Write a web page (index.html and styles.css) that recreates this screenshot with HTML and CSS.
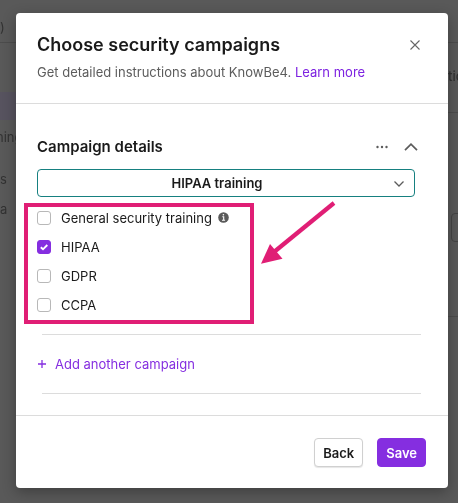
FILE: index.html
```html
<!DOCTYPE html>
<html lang="en">
<head>
<meta charset="utf-8">
<meta name="viewport" content="width=device-width, initial-scale=1">
<title>Choose security campaigns</title>
<link rel="stylesheet" href="styles.css">
</head>
<body>
<div class="backdrop" aria-hidden="true">
  <div class="backdrop-bar">)</div>
  <div class="backdrop-main">
    <div class="rail">
      <span class="rail-item rail-active"></span>
      <span class="rail-item">ning</span>
      <span class="rail-item">s</span>
      <span class="rail-item">a</span>
    </div>
    <div class="side">
      <div class="side-head">tio</div>
      <div class="side-body"><span class="side-box"></span></div>
    </div>
  </div>
</div>
<div class="overlay">
  <form class="modal" role="dialog" aria-labelledby="title">
    <header class="modal-head">
      <div class="title-row">
        <h1 id="title">Choose security campaigns</h1>
        <button type="button" class="icon-btn" aria-label="Close">
          <svg width="10" height="10" viewBox="0 0 10 10"><path d="M.5.5l9 9M9.500.5l-9 9" fill="none" stroke="#666" stroke-width="1.100"/></svg>
        </button>
      </div>
      <p class="lead">Get detailed instructions about KnowBe4. <a href="#">Learn more</a></p>
    </header>
    <section class="modal-body">
      <div class="section-row">
        <h2>Campaign details</h2>
        <button type="button" class="icon-btn" aria-label="More options">
          <svg width="12" height="4" viewBox="0 0 12 4" fill="#5c5c5c"><circle cx="1.500" cy="2" r="1.200"/><circle cx="6" cy="2" r="1.200"/><circle cx="10.500" cy="2" r="1.200"/></svg>
        </button>
        <button type="button" class="icon-btn" aria-label="Collapse">
          <svg width="14" height="8" viewBox="0 0 14 8"><path d="M1 7.200l6-6 6 6" fill="none" stroke="#5c5c5c" stroke-width="1.700"/></svg>
        </button>
      </div>
      <div class="select-wrap">
        <select aria-label="Campaign"><option>HIPAA training</option></select>
        <svg class="select-arrow" width="10" height="6" viewBox="0 0 10 6"><path d="M.5.5L5 5 9.500.5" fill="none" stroke="#5c5c5c" stroke-width="1.300"/></svg>
      </div>
      <div class="options">
        <div class="option">
          <input type="checkbox" id="general"><label for="general">General security training</label>
          <svg width="11" height="11" viewBox="0 0 11 11"><circle cx="5.500" cy="5.500" r="5.300" fill="#5a5a5a"/><path d="M4.300 4.700h1.400v3.300M4 8.200h3.100" fill="none" stroke="#fff" stroke-width="1.100"/><circle cx="5.400" cy="2.700" r=".8" fill="#fff"/></svg>
        </div>
        <div class="option"><input type="checkbox" id="hipaa" checked><label for="hipaa">HIPAA</label>
          <svg class="tick" width="14" height="14" viewBox="0 0 14 14"><path d="M3.800 7.300l2.200 2 4.300-4.300" fill="none" stroke="#fff" stroke-width="1.900"/></svg>
        </div>
        <div class="option"><input type="checkbox" id="gdpr"><label for="gdpr">GDPR</label></div>
        <div class="option"><input type="checkbox" id="ccpa"><label for="ccpa">CCPA</label></div>
        <div class="callout"></div>
        <svg class="arrow" width="78" height="66" viewBox="0 0 78 66"><path d="M74 2L14 51" stroke="#e01e75" stroke-width="4.200"/><path d="M1 62.800L10 43l12.500 14.800z" fill="#e01e75"/></svg>
      </div>
      <div class="add-row">
        <button type="button" class="add">
          <svg width="10" height="10" viewBox="0 0 10 10"><path d="M5 1v8M1 5h8" stroke="#852ee0" stroke-width="1.300"/></svg>
          Add another campaign
        </button>
      </div>
    </section>
    <footer class="modal-foot">
      <button type="button" class="btn">Back</button>
      <button type="submit" class="btn primary">Save</button>
    </footer>
  </form>
</div>
</body>
</html>
```
FILE: styles.css
```css
* { box-sizing: border-box; }

body {
  margin: 0;
  min-height: 100vh;
  background: #595959;
  color: #1a1a1a;
  font: 13px/20px Inter, sans-serif;
}

button, select { font: inherit; color: inherit; }

/* Dimmed page behind the dialog */
.backdrop {
  position: fixed;
  inset: 0;
  display: flex;
  flex-direction: column;
  overflow: hidden;
  color: #323232;
}
.backdrop-bar {
  height: 43px;
  padding-top: 17px;
  border-bottom: 1px solid #4c4c4c;
}
.backdrop-main {
  flex: 1;
  display: flex;
  justify-content: space-between;
}
.rail {
  display: flex;
  flex-direction: column;
  gap: 10px;
  width: 32px;
  padding-top: 49px;
}
.rail-item { height: 20px; }
.rail-active {
  height: 28px;
  margin-bottom: -3px;
  background: #57535f;
}
.rail-item:nth-child(2) {
  margin: 0 0 12px -4px;
}
.side { width: 10px; }
.side-head {
  height: 70px;
  padding-top: 23px;
  border-bottom: 1px solid #4c4c4c;
  font-weight: 500;
}
.side-body {
  height: 204px;
  padding: 100px 0 0 3px;
  border-bottom: 1px solid #4c4c4c;
}
.side-box {
  display: block;
  width: 32px;
  height: 29px;
  border: 1px solid #454545;
  border-radius: 4px;
}

/* Dialog */
.overlay {
  position: relative;
  padding: 13px 10px 15px 16px;
}
.modal {
  background: #fff;
  border-radius: 4px;
  box-shadow: 0 4px 14px rgba(0, 0, 0, 0.3);
}
.modal-head {
  padding: 20px 28px 21px 21px;
  border-bottom: 1px solid #dcdcdc;
}
.title-row {
  display: flex;
  align-items: center;
  justify-content: space-between;
}
h1 {
  margin: 0;
  font-size: 18px;
  line-height: 24px;
  font-weight: 600;
}
.lead {
  margin: 5px 0 0;
  color: #5c5c5c;
}
a { color: #7d22e0; text-decoration: none; }
.icon-btn {
  display: flex;
  padding: 0;
  border: 0;
  background: none;
}

.modal-body { padding: 32px 27px 21px 21px; }
.section-row {
  display: flex;
  align-items: center;
  gap: 16px;
  margin: 0 3px 12px 0;
}
h2 {
  flex: 1;
  margin: 0;
  font-size: 15px;
  line-height: 21px;
  font-weight: 600;
}
.select-wrap {
  position: relative;
  margin-right: 6px;
}
select {
  display: block;
  width: 100%;
  height: 28px;
  padding: 0 18px 0 0;
  border: 1px solid #168080;
  border-radius: 4px;
  appearance: none;
  background: #fff;
  font-weight: 600;
  text-align: center;
  text-align-last: center;
}
.select-arrow {
  position: absolute;
  right: 11px;
  top: 12px;
  pointer-events: none;
}

.options {
  position: relative;
  padding-top: 6px;
}
.option {
  position: relative;
  display: flex;
  align-items: center;
  height: 29px;
}
.option label { margin: 0 6px 0 10px; }
input {
  width: 14px;
  height: 14px;
  margin: 0;
  appearance: none;
  border: 1px solid #b8b8b8;
  border-radius: 3px;
  background: #fff;
}
input:checked {
  border-color: #852ee0;
  background: #852ee0;
}
.tick {
  position: absolute;
  left: 0;
  pointer-events: none;
}
.callout {
  position: absolute;
  top: 6px;
  left: -13px;
  bottom: -5px;
  width: 230px;
  border: 4px solid #e01e75;
  pointer-events: none;
}
.arrow {
  position: absolute;
  top: 4px;
  left: 223px;
  pointer-events: none;
}

.add-row {
  margin: 15px 0 0 5px;
  padding: 19px 0;
  border: solid #dcdcdc;
  border-width: 1px 0;
}
.add {
  display: flex;
  align-items: center;
  gap: 8px;
  margin-left: -5px;
  padding: 0;
  border: 0;
  background: none;
  color: #852ee0;
}

.modal-foot {
  display: flex;
  justify-content: flex-end;
  gap: 14px;
  padding: 22px 22px 21px;
  border-top: 1px solid #dcdcdc;
}
.btn {
  height: 29px;
  padding: 0 8px;
  border: 1px solid #d0d0d0;
  border-radius: 4px;
  background: #fff;
  box-shadow: 0 1px 1px rgba(0, 0, 0, 0.1);
  font-weight: 600;
}
.primary {
  border-color: #852ee0;
  background: #852ee0;
  box-shadow: none;
  color: #fff;
}
```
